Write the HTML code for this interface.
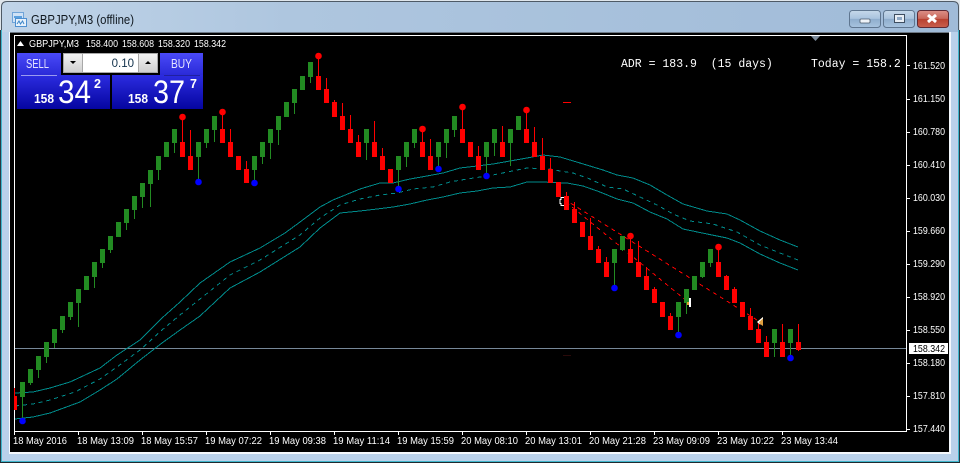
<!DOCTYPE html>
<html><head><meta charset="utf-8"><title>GBPJPY,M3 (offline)</title>
<style>
html,body{margin:0;padding:0;background:#2a3a44;width:960px;height:463px;overflow:hidden}
svg{display:block}
text{font-family:"Liberation Sans",sans-serif;white-space:pre}
text.m{font-family:"Liberation Mono",monospace}
</style></head><body>
<svg width="960" height="463" viewBox="0 0 960 463" xmlns="http://www.w3.org/2000/svg">
<defs>
<linearGradient id="tb" x1="0" x2="1" y1="0" y2="0"><stop offset="0" stop-color="#c0d4e8"/><stop offset=".3" stop-color="#aec6df"/><stop offset="1" stop-color="#a0bbd8"/></linearGradient>
<linearGradient id="btn" x1="0" x2="0" y1="0" y2="1"><stop offset="0" stop-color="#4a4af8"/><stop offset="1" stop-color="#2a2ad8"/></linearGradient>
<linearGradient id="pr" x1="0" x2="0" y1="0" y2="1"><stop offset="0" stop-color="#2c2ce0"/><stop offset="1" stop-color="#0505a0"/></linearGradient>
<linearGradient id="wb" x1="0" x2="0" y1="0" y2="1"><stop offset="0" stop-color="#c6d8ea"/><stop offset=".48" stop-color="#a9c3de"/><stop offset=".5" stop-color="#8fadcd"/><stop offset="1" stop-color="#a8c4df"/></linearGradient>
<linearGradient id="cb" x1="0" x2="0" y1="0" y2="1"><stop offset="0" stop-color="#dc9088"/><stop offset=".48" stop-color="#c9675a"/><stop offset=".5" stop-color="#b8402f"/><stop offset="1" stop-color="#c9604e"/></linearGradient>
<linearGradient id="sp" x1="0" x2="0" y1="0" y2="1"><stop offset="0" stop-color="#f2f2f2"/><stop offset="1" stop-color="#d0d0d0"/></linearGradient>
</defs>
<!-- window frame -->
<rect x="0" y="0" width="960" height="30" fill="#dfe6ec"/>
<path d="M1.500 461.500V7q0-5.500 5.500-5.500H953q5.500 0 5.500 5.500V461.500z" fill="#b9d1ea"/>
<path d="M1.500 30V461.500H958.500V30" fill="none" stroke="#3fb6cc" stroke-width="1"/>
<path d="M2 32V7q0-5 5-5H953q5 0 5 5V32z" fill="url(#tb)"/>
<path d="M1.500 30V7q0-5.500 5.500-5.500H953q5.500 0 5.500 5.500V30" fill="none" stroke="#4e5a66" stroke-width="1"/>
<path d="M0 462.500H960" stroke="#1e2a30" stroke-width="1"/>
<rect x="9" y="32" width="942" height="422" fill="#f4f8fc"/>
<rect x="10" y="32" width="939" height="420" fill="#000"/>
<rect x="10" y="32" width="939" height="1" fill="#6d7884"/>
<!-- title icon -->
<g shape-rendering="crispEdges">
<rect x="12.500" y="12.500" width="11" height="10" fill="#cfe2f6" stroke="#6fa4d8"/>
<rect x="15.500" y="18.500" width="11" height="8" fill="#e6f1fb" stroke="#4d8fd0"/>
<path d="M14 16h8v2h-8z" fill="#5aa0de"/>
</g>
<path d="M17 24l2-3 1.500 3 2-3 1.500 3" fill="none" stroke="#3d86c8" stroke-width="1"/>
<text x="31" y="24" font-size="12.500" fill="#10181f" textLength="103" lengthAdjust="spacingAndGlyphs">GBPJPY,M3 (offline)</text>
<!-- window buttons -->
<rect x="849.500" y="10.500" width="31" height="17" rx="3" fill="url(#wb)" stroke="#5f7690"/>
<rect x="860" y="19" width="10" height="4" rx="1" fill="#eef3f8" stroke="#4a5a6c" stroke-width=".8"/>
<rect x="883.500" y="10.500" width="31" height="17" rx="3" fill="url(#wb)" stroke="#5f7690"/>
<rect x="894.500" y="14.500" width="10" height="8" fill="#e8eef5" stroke="#3e4e60"/><rect x="897" y="17" width="5" height="3" fill="#8fa9c6"/>
<rect x="917.500" y="10.500" width="31" height="17" rx="3" fill="url(#cb)" stroke="#5e2a34"/>
<path d="M928 15l8 7M936 15l-8 7" stroke="#fff" stroke-width="3"/>
<!-- chart frame -->
<g shape-rendering="crispEdges">
<path d="M14.500 431.500V35.500H906.500V431.500H14z" fill="none" stroke="#fff"/>
<path fill="#fff" d="M907 65h3v1h-3zM907 99h3v1h-3zM907 132h3v1h-3zM907 165h3v1h-3zM907 198h3v1h-3zM907 231h3v1h-3zM907 264h3v1h-3zM907 297h3v1h-3zM907 330h3v1h-3zM907 363h3v1h-3zM907 396h3v1h-3zM907 429h3v1h-3z"/>
<path fill="#fff" d="M14 432h1v3h-1zM78 432h1v3h-1zM142 432h1v3h-1zM206 432h1v3h-1zM270 432h1v3h-1zM334 432h1v3h-1zM398 432h1v3h-1zM462 432h1v3h-1zM526 432h1v3h-1zM590 432h1v3h-1zM654 432h1v3h-1zM718 432h1v3h-1zM782 432h1v3h-1z"/>
<rect x="15" y="348" width="891" height="1" fill="#778899"/>
</g>
<path d="M811 36h9l-4.500 5z" fill="#7d8c9c"/>
<!-- moving average bands -->
<g fill="none" stroke="#008b8b" stroke-width="1" shape-rendering="crispEdges">
<polyline points="15,393 33,392 50,388 70,382 100,368 117,355 140,340 147,333 162,318 180,302 200,283 230,262 260,248 285,233 300,222 320,207 333,200 360,189 380,183 393,183 410,179 427,176 443,173 460,168 477,166 493,164 510,161 527,158 543,155 560,157 580,163 603,170 617,175 633,178 650,185 667,195 683,204 707,211 727,214 740,220 760,231 780,240 798,247"/>
<polyline stroke-dasharray="4 4" points="15,406 33,404 50,400 75,392 100,379 117,367 140,350 162,330 180,315 200,299 230,275 260,260 300,235 320,218 340,205 360,199 380,195 397,193 413,189 433,187 450,182 467,179 493,175 517,170 527,168 550,169 560,171 573,173 590,179 607,187 623,189 640,197 657,205 673,214 690,221 713,224 737,232 760,245 780,253 798,260"/>
<polyline points="15,419 33,417 50,413 80,402 100,390 117,379 140,360 162,343 180,330 200,316 230,288 260,272 300,247 320,228 340,213 360,211 377,209 393,207 410,204 427,200 443,197 460,193 477,191 493,188 510,187 527,182 543,182 560,183 567,183 583,186 600,192 617,199 633,203 650,212 667,219 683,229 707,234 727,238 740,243 760,254 780,263 798,270"/>
</g>
<!-- red trend lines -->
<g fill="none" stroke="#f00" stroke-width="1" stroke-dasharray="4 4" shape-rendering="crispEdges">
<path d="M564 199L757 320"/>
<path d="M566 202L688 302"/>
</g>
<!-- arrow under candle -->
<path d="M565 197.500h-4v2h-1v4h1v2h4" fill="#000" stroke="#fff" stroke-width="1" shape-rendering="crispEdges"/>
<!-- green candles -->
<path fill="#228b22" shape-rendering="crispEdges" d="
M20 382h5v15h-5zM22 397h1v23h-1z
M28 369h5v14h-5zM30 383h1v2h-1z
M36 356h5v14h-5zM38 370h1v8h-1z
M44 342h5v15h-5zM46 357h1v6h-1z
M52 329h5v14h-5zM54 343h1v5h-1z
M60 316h5v14h-5zM62 330h1v3h-1z
M68 302h5v15h-5zM70 317h1v3h-1z
M76 289h5v14h-5zM78 303h1v24h-1z
M84 276h5v14h-5z
M92 262h5v15h-5zM94 277h1v11h-1z
M100 249h5v14h-5zM102 263h1v5h-1z
M108 236h5v14h-5zM110 250h1v3h-1z
M116 222h5v15h-5z
M124 209h5v14h-5zM126 223h1v7h-1z
M132 196h5v14h-5zM134 210h1v9h-1z
M140 183h5v14h-5zM142 197h1v11h-1z
M148 170h5v14h-5zM150 184h1v23h-1z
M156 156h5v14h-5zM158 170h1v10h-1z
M164 142h5v15h-5z
M172 129h5v14h-5zM174 143h1v10h-1z
M196 142h5v15h-5zM198 157h1v25h-1z
M204 129h5v14h-5zM206 143h1v5h-1z
M212 116h5v14h-5zM214 130h1v12h-1z
M252 156h5v14h-5zM254 170h1v13h-1z
M260 142h5v15h-5zM262 157h1v7h-1z
M268 129h5v14h-5zM270 143h1v16h-1z
M276 116h5v14h-5zM278 130h1v15h-1z
M284 102h5v15h-5z
M292 89h5v14h-5zM294 103h1v11h-1z
M300 76h5v14h-5z
M308 62h5v15h-5zM310 77h1v6h-1z
M364 129h5v14h-5zM366 143h1v17h-1z
M396 156h5v14h-5zM398 170h1v19h-1z
M404 142h5v15h-5zM406 157h1v10h-1z
M412 129h5v14h-5zM414 143h1v5h-1z
M436 142h5v15h-5zM438 157h1v12h-1z
M444 129h5v14h-5zM446 143h1v15h-1z
M452 116h5v14h-5zM454 130h1v7h-1z
M484 142h5v15h-5zM486 157h1v19h-1z
M492 129h5v14h-5zM494 143h1v13h-1z
M508 129h5v14h-5zM510 143h1v23h-1z
M516 116h5v14h-5z
M612 249h5v14h-5zM614 263h1v25h-1z
M620 236h5v14h-5zM622 250h1v1h-1z
M676 302h5v15h-5zM678 317h1v18h-1z
M684 289h5v14h-5zM686 303h1v11h-1z
M692 276h5v14h-5z
M700 262h5v15h-5zM702 277h1v1h-1z
M708 249h5v14h-5zM710 263h1v4h-1z
M772 329h5v14h-5zM774 343h1v14h-1z
M788 329h5v14h-5zM790 343h1v16h-1z"/>
<!-- red candles -->
<path fill="#f00" shape-rendering="crispEdges" d="
M14 388h1v8h-1zM14 396h3v14h-3z
M180 142h5v15h-5zM182 117h1v25h-1z
M188 156h5v14h-5zM190 130h1v26h-1z
M220 129h5v14h-5zM222 112h1v17h-1z
M228 142h5v15h-5zM230 129h1v13h-1z
M236 156h5v14h-5z
M244 169h5v14h-5zM246 161h1v8h-1z
M316 76h5v14h-5zM318 56h1v20h-1z
M324 89h5v14h-5zM326 78h1v11h-1z
M332 102h5v15h-5zM334 100h1v2h-1z
M340 116h5v14h-5zM342 103h1v13h-1z
M348 129h5v14h-5zM350 115h1v14h-1z
M356 142h5v15h-5zM358 135h1v7h-1z
M372 142h5v15h-5zM374 121h1v21h-1z
M380 156h5v14h-5zM382 148h1v8h-1z
M388 169h5v14h-5z
M420 142h5v15h-5zM422 129h1v13h-1z
M428 156h5v14h-5zM430 139h1v17h-1z
M460 129h5v14h-5zM462 107h1v22h-1z
M468 142h5v15h-5z
M476 156h5v14h-5zM478 146h1v10h-1z
M500 142h5v15h-5zM502 126h1v16h-1z
M524 129h5v14h-5zM526 110h1v19h-1z
M532 142h5v15h-5zM534 127h1v15h-1z
M540 156h5v14h-5zM542 138h1v18h-1z
M548 169h5v14h-5zM550 158h1v11h-1z
M556 182h5v15h-5z
M564 196h5v14h-5zM566 192h1v4h-1z
M572 209h5v14h-5zM574 202h1v7h-1z
M580 222h5v15h-5z
M588 236h5v14h-5zM590 218h1v18h-1z
M596 249h5v14h-5zM598 246h1v3h-1z
M604 262h5v15h-5zM606 257h1v5h-1z
M628 249h5v14h-5zM630 236h1v13h-1z
M636 262h5v15h-5zM638 241h1v21h-1z
M644 276h5v14h-5zM646 267h1v9h-1z
M652 289h5v14h-5zM654 287h1v2h-1z
M660 302h5v15h-5z
M668 316h5v14h-5zM670 313h1v3h-1z
M716 262h5v15h-5zM718 247h1v15h-1z
M724 276h5v14h-5zM726 275h1v1h-1z
M732 289h5v14h-5zM734 287h1v2h-1z
M740 302h5v15h-5z
M748 316h5v14h-5zM750 308h1v8h-1z
M756 329h5v14h-5zM758 322h1v7h-1z
M764 342h5v15h-5zM766 336h1v6h-1z
M780 342h5v15h-5zM782 324h1v18h-1z
M796 342h5v8h-5zM798 324h1v27h-1z
M563 102h8v1h-8z"/>
<rect x="563" y="355" width="8" height="1" fill="#2a0a0a" shape-rendering="crispEdges"/>
<!-- dots -->
<g fill="#f00">
<circle cx="182.500" cy="117" r="3.300"/><circle cx="222.500" cy="112" r="3.300"/><circle cx="318.500" cy="56" r="3.300"/><circle cx="422.500" cy="129" r="3.300"/><circle cx="462.500" cy="107" r="3.300"/><circle cx="526.500" cy="110" r="3.300"/><circle cx="630.500" cy="236" r="3.300"/><circle cx="718.500" cy="247" r="3.300"/>
</g>
<g fill="#00f">
<circle cx="22.500" cy="421" r="3.300"/><circle cx="198.500" cy="182" r="3.300"/><circle cx="254.500" cy="183" r="3.300"/><circle cx="398.500" cy="189" r="3.300"/><circle cx="438.500" cy="169" r="3.300"/><circle cx="486.500" cy="176" r="3.300"/><circle cx="614.500" cy="288" r="3.300"/><circle cx="678.500" cy="335" r="3.300"/><circle cx="790.500" cy="358" r="3.300"/>
</g>
<!-- arrows -->
<path d="M689 298h2v9h-2z" fill="#fff"/><path d="M687 302h2v3h-2z" fill="#e0a030"/>
<path d="M757 322l6-5v9z" fill="#e0a040"/><path d="M757 322l6-5v1.500l-4 3.500 1.500 3z" fill="#fff"/>
<!-- axis labels -->
<g fill="#fff" font-size="10.500">
<text x="913" y="69" textLength="32" lengthAdjust="spacingAndGlyphs">161.520</text>
<text x="913" y="102" textLength="32" lengthAdjust="spacingAndGlyphs">161.150</text>
<text x="913" y="135" textLength="32" lengthAdjust="spacingAndGlyphs">160.780</text>
<text x="913" y="168" textLength="32" lengthAdjust="spacingAndGlyphs">160.410</text>
<text x="913" y="201" textLength="32" lengthAdjust="spacingAndGlyphs">160.030</text>
<text x="913" y="234" textLength="32" lengthAdjust="spacingAndGlyphs">159.660</text>
<text x="913" y="267" textLength="32" lengthAdjust="spacingAndGlyphs">159.290</text>
<text x="913" y="300" textLength="32" lengthAdjust="spacingAndGlyphs">158.920</text>
<text x="913" y="333" textLength="32" lengthAdjust="spacingAndGlyphs">158.550</text>
<text x="913" y="366" textLength="32" lengthAdjust="spacingAndGlyphs">158.180</text>
<text x="913" y="399" textLength="32" lengthAdjust="spacingAndGlyphs">157.810</text>
<text x="913" y="432" textLength="32" lengthAdjust="spacingAndGlyphs">157.440</text>
<text x="13" y="444" textLength="54" lengthAdjust="spacingAndGlyphs">18 May 2016</text>
<text x="77" y="444" textLength="57" lengthAdjust="spacingAndGlyphs">18 May 13:09</text>
<text x="141" y="444" textLength="57" lengthAdjust="spacingAndGlyphs">18 May 15:57</text>
<text x="205" y="444" textLength="57" lengthAdjust="spacingAndGlyphs">19 May 07:22</text>
<text x="269" y="444" textLength="57" lengthAdjust="spacingAndGlyphs">19 May 09:38</text>
<text x="333" y="444" textLength="57" lengthAdjust="spacingAndGlyphs">19 May 11:14</text>
<text x="397" y="444" textLength="57" lengthAdjust="spacingAndGlyphs">19 May 15:59</text>
<text x="461" y="444" textLength="57" lengthAdjust="spacingAndGlyphs">20 May 08:10</text>
<text x="525" y="444" textLength="57" lengthAdjust="spacingAndGlyphs">20 May 13:01</text>
<text x="589" y="444" textLength="57" lengthAdjust="spacingAndGlyphs">20 May 21:28</text>
<text x="653" y="444" textLength="57" lengthAdjust="spacingAndGlyphs">23 May 09:09</text>
<text x="717" y="444" textLength="57" lengthAdjust="spacingAndGlyphs">23 May 10:22</text>
<text x="781" y="444" textLength="57" lengthAdjust="spacingAndGlyphs">23 May 13:44</text>
<path d="M17 46l3.500-5 3.500 5z"/>
<text x="29" y="47" textLength="50" lengthAdjust="spacingAndGlyphs">GBPJPY,M3</text>
<text x="86" y="47" textLength="32" lengthAdjust="spacingAndGlyphs">158.400</text>
<text x="122" y="47" textLength="32" lengthAdjust="spacingAndGlyphs">158.608</text>
<text x="158" y="47" textLength="32" lengthAdjust="spacingAndGlyphs">158.320</text>
<text x="194" y="47" textLength="32" lengthAdjust="spacingAndGlyphs">158.342</text>
</g>
<rect x="909" y="343" width="39" height="11" fill="#fff"/>
<text x="913" y="352" fill="#000" font-size="10.500" textLength="32" lengthAdjust="spacingAndGlyphs">158.342</text>
<g fill="#fff" font-size="11.500">
<text class="m" x="621" y="67">ADR = 183.9  (15 days)</text>
<text class="m" x="811" y="67">Today = 158.2</text>
</g>
<!-- trade panel -->
<g shape-rendering="crispEdges">
<rect x="17" y="53" width="44" height="22" fill="url(#btn)"/>
<rect x="160" y="53" width="43" height="22" fill="url(#btn)"/>
<rect x="17" y="75" width="93" height="34" fill="url(#pr)"/>
<rect x="112" y="75" width="91" height="34" fill="url(#pr)"/>
<rect x="21" y="75" width="36" height="1" fill="#9a9af0"/>
<rect x="164" y="75" width="36" height="1" fill="#2020a0"/>
<rect x="63" y="53" width="95" height="20" fill="#a8a8a8"/>
<rect x="64" y="54" width="18" height="18" fill="url(#sp)"/>
<rect x="83" y="54" width="55" height="18" fill="#fff"/>
<rect x="139" y="54" width="18" height="18" fill="url(#sp)"/>
</g>
<path d="M70 61h6l-3 3z" fill="#000"/><path d="M145 64h6l-3-3z" fill="#000"/>
<text x="134" y="67" text-anchor="end" font-size="11.500" fill="#10304a">0.10</text>
<text x="26" y="68" font-size="13" fill="#e4e4ff" textLength="23" lengthAdjust="spacingAndGlyphs">SELL</text>
<text x="171" y="68" font-size="13" fill="#e4e4ff" textLength="21" lengthAdjust="spacingAndGlyphs">BUY</text>
<g fill="#fff">
<text x="34" y="103" font-size="12.500" font-weight="bold" textLength="20" lengthAdjust="spacingAndGlyphs">158</text>
<text x="58" y="103" font-size="32" textLength="33" lengthAdjust="spacingAndGlyphs">34</text>
<text x="94" y="88" font-size="12.500" font-weight="bold">2</text>
<text x="128" y="103" font-size="12.500" font-weight="bold" textLength="20" lengthAdjust="spacingAndGlyphs">158</text>
<text x="153" y="103" font-size="32" textLength="32" lengthAdjust="spacingAndGlyphs">37</text>
<text x="190" y="88" font-size="12.500" font-weight="bold">7</text>
</g>
</svg>
</body></html>
